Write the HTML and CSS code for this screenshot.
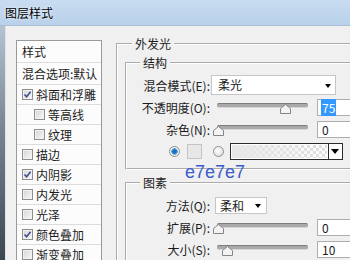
FILE: index.html
```html
<!DOCTYPE html>
<html lang="zh-CN">
<head>
  <meta charset="UTF-8">
  <title>图层样式</title>
  <link rel="stylesheet" href="styles.css">
</head>
<body>
  <div class="window">

    <!-- title bar -->
    <div class="titlebar"><span class="title">图层样式</span></div>

    <div class="frame">
      <div class="frame-edge"></div>

      <div class="dialog">
        <!-- STYLE LIST -->
        <ul class="style-list">
          <li class="head">样式</li>
          <li class="head">混合选项:默认</li>
          <li><span class="cb"><svg viewBox="0 0 9 9"><path d="M1.5 4.5 L3.6 6.8 L7.6 1.8"/></svg></span>斜面和浮雕</li>
          <li class="sub"><span class="cb"></span>等高线</li>
          <li class="sub"><span class="cb"></span>纹理</li>
          <li><span class="cb"></span>描边</li>
          <li><span class="cb"><svg viewBox="0 0 9 9"><path d="M1.5 4.5 L3.6 6.8 L7.6 1.8"/></svg></span>内阴影</li>
          <li><span class="cb"></span>内发光</li>
          <li><span class="cb"></span>光泽</li>
          <li><span class="cb"><svg viewBox="0 0 9 9"><path d="M1.5 4.5 L3.6 6.8 L7.6 1.8"/></svg></span>颜色叠加</li>
          <li><span class="cb"></span>渐变叠加</li>
        </ul>

        <!-- SETTINGS -->
        <div class="settings">
          <fieldset class="group outer">
            <legend class="outer-title">外发光</legend>

            <fieldset class="group inner">
              <legend>结构</legend>
              <div class="row">
                <span class="lbl">混合模式(E):</span>
                <div class="select wide">柔光<span class="caret"></span></div>
              </div>
              <div class="row">
                <span class="lbl">不透明度(O):</span>
                <div class="slider">
                  <div class="track"></div>
                  <svg class="thumb" style="left: 70px" viewBox="0 0 11 10"><polygon points="0.5,9.5 0.5,4.5 5.5,0.5 10.5,4.5 10.5,9.5"/></svg>
                </div>
                <div class="value"><span class="selected">75</span></div>
              </div>
              <div class="row">
                <span class="lbl">杂色(N):</span>
                <div class="slider">
                  <div class="track"></div>
                  <svg class="thumb" style="left: 3px" viewBox="0 0 11 10"><polygon points="0.5,9.5 0.5,4.5 5.5,0.5 10.5,4.5 10.5,9.5"/></svg>
                </div>
                <div class="value">0</div>
              </div>
              <div class="row colors">
                <span class="radio on"></span>
                <span class="swatch"></span>
                <span class="radio"></span>
                <div class="gradient-pick">
                  <span class="gradient"></span>
                  <span class="drop"></span>
                </div>
              </div>
            </fieldset>

            <fieldset class="group inner elements">
              <legend>图素</legend>
              <div class="row">
                <span class="lbl">方法(Q):</span>
                <div class="select small">柔和<span class="caret"></span></div>
              </div>
              <div class="row">
                <span class="lbl">扩展(P):</span>
                <div class="slider">
                  <div class="track"></div>
                  <svg class="thumb" style="left: 3px" viewBox="0 0 11 10"><polygon points="0.5,9.5 0.5,4.5 5.5,0.5 10.5,4.5 10.5,9.5"/></svg>
                </div>
                <div class="value">0</div>
              </div>
              <div class="row">
                <span class="lbl">大小(S):</span>
                <div class="slider">
                  <div class="track"></div>
                  <svg class="thumb" style="left: 12px" viewBox="0 0 11 10"><polygon points="0.5,9.5 0.5,4.5 5.5,0.5 10.5,4.5 10.5,9.5"/></svg>
                </div>
                <div class="value">10</div>
              </div>
            </fieldset>
          </fieldset>
        </div>
      </div>
    </div>

    <!-- colour note written over the screenshot -->
    <div class="note">e7e7e7</div>
  </div>
</body>
</html>
```

FILE: styles.css
```css
/* ------------------------------
   BASIC
------------------------------ */
* {
  box-sizing: border-box;
  margin: 0;
  padding: 0;
}

body {
  font-family: "Noto Sans CJK SC", "Noto Sans", sans-serif;
  font-size: 12px;
  color: #1c1c1c;
  background: #f0f0f0;
}

.window {
  position: relative;
  width: 350px;
  height: 260px;
  overflow: hidden;
}

/* ------------------------------
   TITLE BAR / FRAME
------------------------------ */
.titlebar {
  height: 26px;
  padding: 4px 0 0 5px;
  background: linear-gradient(#c8dcf1, #b9d0ea);
  border-bottom: 1px solid #a9bdd4;
}

.title {
  line-height: 16px;
  color: #000;
  text-shadow: 0 0 4px #e6f0fa, 0 0 2px #e6f0fa;
}

.frame {
  display: flex;
  height: 234px;
}

.frame-edge {
  flex: none;
  width: 6px;
  background: linear-gradient(#b4c3d2, #7d8996 40%, #3d4651);
  border-right: 1px solid #dfe4ea;
}

.dialog {
  flex: 1;
  min-width: 0;
  overflow: hidden;
  display: flex;
  align-items: flex-start;
  padding: 11px 0 0 10px;
  background: #f0f0f0;
}

/* ------------------------------
   STYLE LIST
------------------------------ */
.style-list {
  list-style: none;
  flex: none;
  width: 86px;
  margin-top: 3px;
  background: #fcfcfc;
  border: 1px solid #9a9a9a;
}

.style-list li {
  display: flex;
  align-items: center;
  height: 20px;
  padding-left: 5px;
  border-bottom: 1px solid #dcdcdc;
  line-height: 19px;
  white-space: nowrap;
  overflow: hidden;
}

.style-list li.head {
  height: 22px;
}

.style-list li.sub {
  padding-left: 17px;
}

.cb {
  flex: none;
  width: 11px;
  height: 11px;
  margin-right: 3px;
  border: 1px solid #8e8f8f;
  background: linear-gradient(135deg, #d4d4d4, #f9f9f9);
  box-shadow: inset 0 0 0 1px #f2f2f2;
}

.cb svg {
  display: block;
  width: 9px;
  height: 9px;
  fill: none;
  stroke: #3f4d8f;
  stroke-width: 1.6;
}

/* ------------------------------
   GROUP BOXES
------------------------------ */
.settings {
  flex: none;
  width: 270px;
  margin-left: 14px;
}

.group {
  min-width: 0;
  border: 2px groove #fff;
}

.group legend {
  line-height: 14px;
  padding: 0 3px;
  margin-left: 13px;
}

.group.outer {
  padding: 5px 0 0 7px;
  border-right: none;
  border-bottom: none;
}

.group.outer > .outer-title {
  margin-left: 7px;
}

.group.inner {
  padding: 4px 0 6px 0;
}

.group.elements {
  margin-top: 6px;
}

/* ------------------------------
   ROWS
------------------------------ */
.row {
  display: flex;
  align-items: center;
  height: 22px;
}

.lbl {
  flex: none;
  width: 83px;
  text-align: right;
  white-space: nowrap;
}

.select {
  position: relative;
  flex: none;
  height: 20px;
  line-height: 18px;
  padding-left: 6px;
  background: #fff;
  border: 1px solid #c6c6c6;
}

.select.wide {
  width: 125px;
  margin-left: 1px;
}

.select.small {
  width: 52px;
  height: 17px;
  line-height: 15px;
  margin-left: 5px;
  padding-left: 4px;
}

.caret {
  position: absolute;
  right: 4px;
  top: 50%;
  margin-top: -1px;
  border-left: 3px solid transparent;
  border-right: 3px solid transparent;
  border-top: 4px solid #000;
}

.select.small .caret {
  right: 5px;
}

/* sliders */
.slider {
  position: relative;
  flex: none;
  width: 107px;
  height: 18px;
}

.track {
  width: 91px;
  height: 5px;
  margin: 5px 0 0 7px;
  background: #a9a9a9;
  border-top: 1px solid #7c7c7c;
  border-bottom: 1px solid #d6d6d6;
  border-radius: 2px;
}

.thumb {
  position: absolute;
  top: 6px;
  width: 11px;
  height: 10px;
  fill: #f3f3f3;
  stroke: #858585;
  stroke-width: 1;
}

.value {
  flex: none;
  width: 40px;
  height: 17px;
  line-height: 15px;
  padding-left: 4px;
  background: #fff;
  border: 1px solid #abadb3;
}

.value .selected {
  margin-left: -1px;
  padding: 0 1px;
  background: #3399ff;
  color: #fff;
}

/* colour row */
.row.colors {
  padding-left: 42px;
}

.radio {
  flex: none;
  width: 11px;
  height: 11px;
  border-radius: 50%;
  border: 1px solid #8f8f8f;
  background: radial-gradient(circle at 40% 40%, #fff, #d8d8d8);
}

.radio.on {
  background: radial-gradient(circle, #1d6fbf 0 2px, #5aa7e8 2.5px 3px, #f2f2f2 3.5px);
}

.swatch {
  flex: none;
  width: 15px;
  height: 15px;
  margin: 0 11px 0 7px;
  background: #e7e7e7;
  border: 1px solid #c4c4c4;
}

.gradient-pick {
  display: flex;
  flex: none;
  height: 17px;
  margin-left: 6px;
  border: 1px solid #2b2b2b;
}

.gradient {
  width: 97px;
  border: 1px solid #fff;
  background:
    linear-gradient(to right, #e7e7e7, rgba(231, 231, 231, 0)),
    repeating-conic-gradient(#dedede 0 25%, #fff 0 50%) 0 0 / 6px 6px;
}

.drop {
  position: relative;
  width: 14px;
  background: #fff;
  border-left: 1px solid #2b2b2b;
}

.drop::after {
  content: "";
  position: absolute;
  left: 2px;
  top: 5px;
  border-left: 4px solid transparent;
  border-right: 4px solid transparent;
  border-top: 5px solid #000;
}

/* ------------------------------
   NOTE OVER THE PICTURE
------------------------------ */
.note {
  position: absolute;
  left: 185px;
  top: 162px;
  font-family: "Liberation Sans", Arial, sans-serif;
  font-size: 18px;
  line-height: 20px;
  color: #3a5dcb;
}
```
